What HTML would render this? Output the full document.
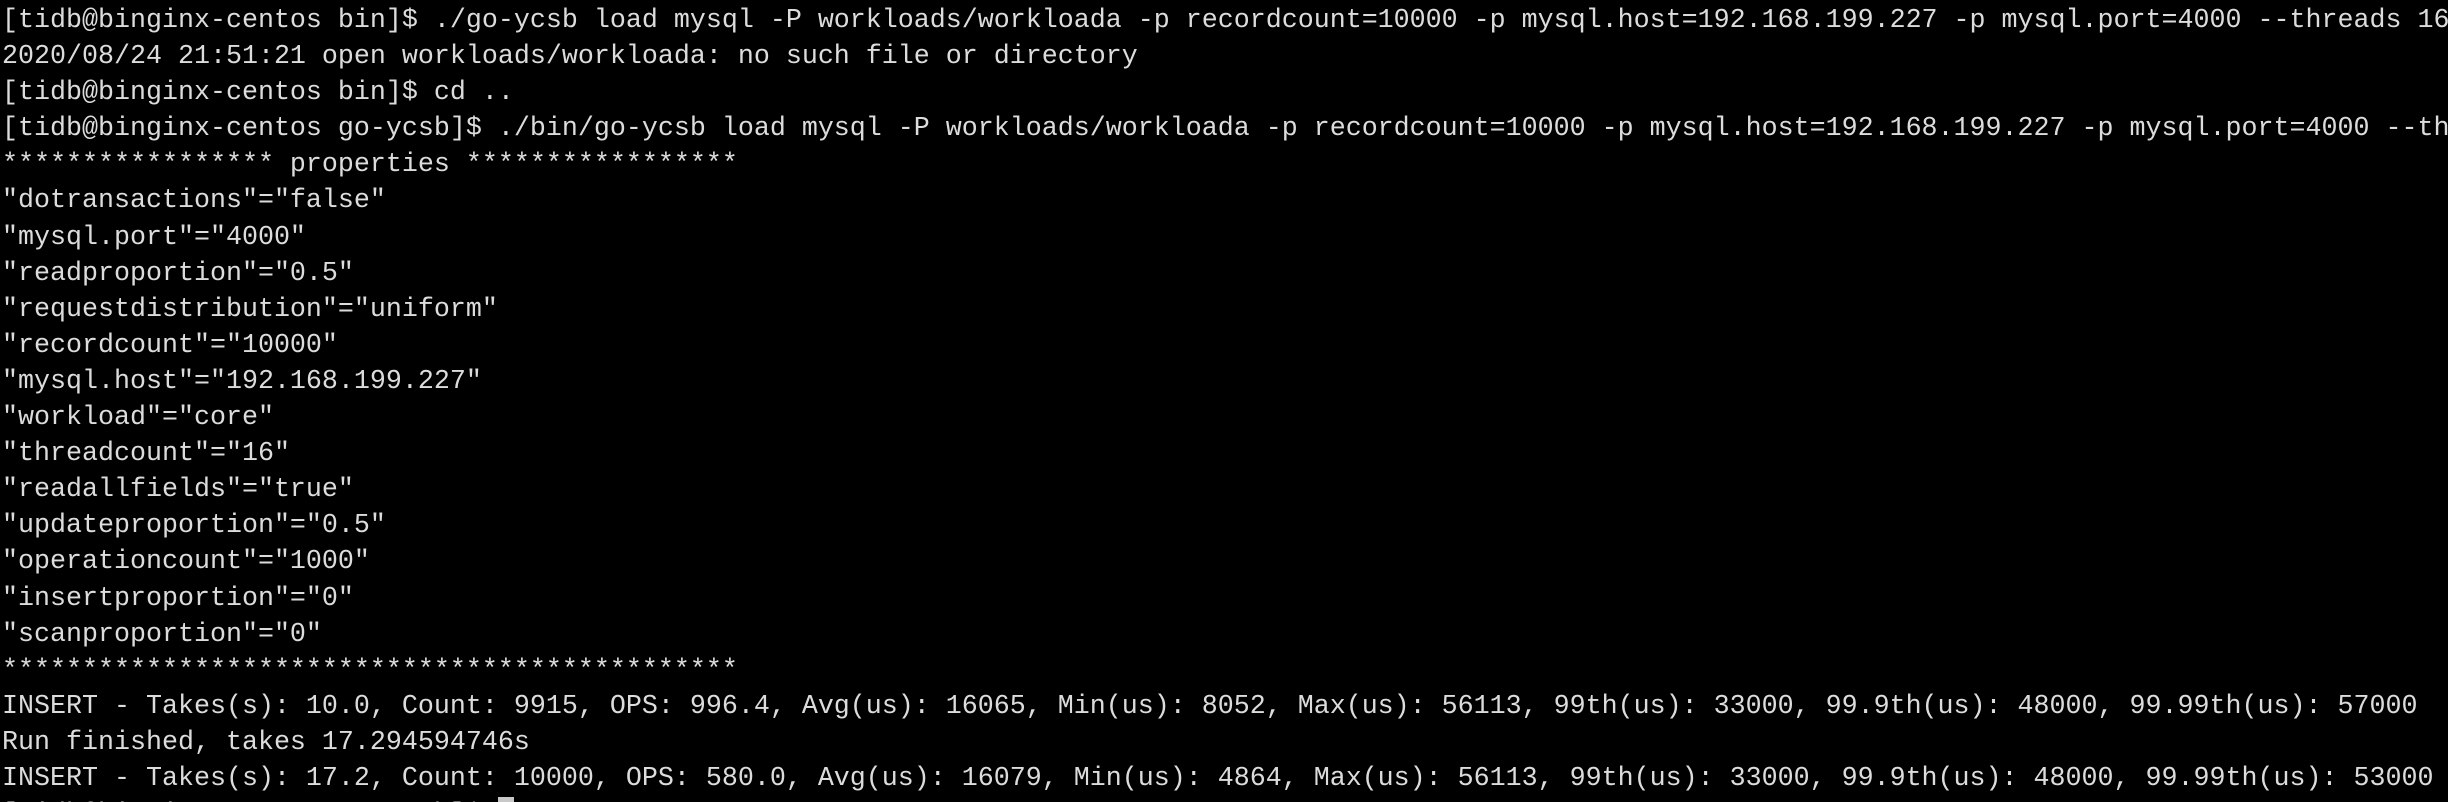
<!DOCTYPE html>
<html><head><meta charset="utf-8"><style>
html,body{margin:0;padding:0;background:#000;width:2448px;height:802px;overflow:hidden}
#wrap{position:relative;width:2448px;height:802px;overflow:hidden;background:#000}
pre{position:absolute;left:2px;top:3px;margin:0;font-family:"Liberation Mono","DejaVu Sans Mono",monospace;font-size:26.67px;line-height:36.1px;color:#dcdcdc;white-space:pre}
.cur{display:inline-block;width:16px;height:30px;background:#c8c8c8;vertical-align:-6px}
</style></head><body><div id="wrap"><pre>[tidb@binginx-centos bin]$ ./go-ycsb load mysql -P workloads/workloada -p recordcount=10000 -p mysql.host=192.168.199.227 -p mysql.port=4000 --threads 16
2020/08/24 21:51:21 open workloads/workloada: no such file or directory
[tidb@binginx-centos bin]$ cd ..
[tidb@binginx-centos go-ycsb]$ ./bin/go-ycsb load mysql -P workloads/workloada -p recordcount=10000 -p mysql.host=192.168.199.227 -p mysql.port=4000 --th
***************** properties *****************
"dotransactions"="false"
"mysql.port"="4000"
"readproportion"="0.5"
"requestdistribution"="uniform"
"recordcount"="10000"
"mysql.host"="192.168.199.227"
"workload"="core"
"threadcount"="16"
"readallfields"="true"
"updateproportion"="0.5"
"operationcount"="1000"
"insertproportion"="0"
"scanproportion"="0"
**********************************************
INSERT - Takes(s): 10.0, Count: 9915, OPS: 996.4, Avg(us): 16065, Min(us): 8052, Max(us): 56113, 99th(us): 33000, 99.9th(us): 48000, 99.99th(us): 57000
Run finished, takes 17.294594746s
INSERT - Takes(s): 17.2, Count: 10000, OPS: 580.0, Avg(us): 16079, Min(us): 4864, Max(us): 56113, 99th(us): 33000, 99.9th(us): 48000, 99.99th(us): 53000
[tidb@binginx-centos go-ycsb]$ <span class="cur"></span></pre></div></body></html>
